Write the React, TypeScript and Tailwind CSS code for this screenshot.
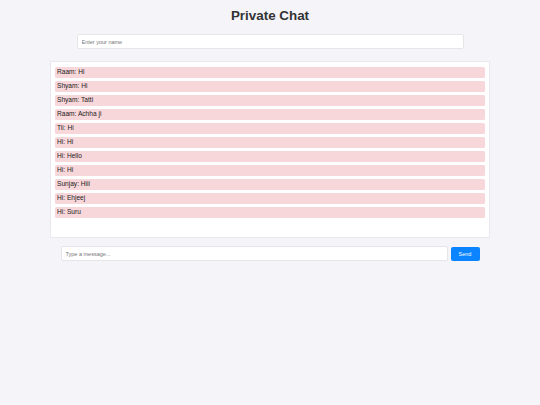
import React from "react";

const messages = [
  "Raam: Hi",
  "Shyam: Hi",
  "Shyam: Tatti",
  "Raam: Achha ji",
  "Tii: Hi",
  "Hi: Hi",
  "Hi: Hello",
  "Hi: Hi",
  "Sunjay: Hiii",
  "Hi: Ehjeej",
  "Hi: Suru",
];

export default function App() {
  return (
    <div className="w-[540px] h-[405px] bg-[#f4f4f9] text-[#333] flex flex-col items-center font-['Liberation_Sans',Arial,sans-serif]">
      <h1 className="mt-[7px] text-[13.4px] leading-[18px] font-bold text-[#333]">Private Chat</h1>
      <input
        className="mt-[9px] w-[387px] h-[15px] bg-white border border-[#e6e6ea] rounded-[2px] px-[4px] text-[5.5px] outline-none placeholder:text-[#777]"
        placeholder="Enter your name"
      />
      <div className="mt-[12px] w-[440px] h-[177px] bg-white border border-[#e8e8ee] rounded-[1px] px-[4px] pt-[5px] flex flex-col gap-[3.3px]">
        {messages.map((m, i) => (
          <div key={i} className="h-[10.7px] bg-[#f8d7da] rounded-[1.5px] px-[2px] text-[6.6px] leading-[10.7px] text-[#1a1a1a]">
            {m}
          </div>
        ))}
      </div>
      <div className="mt-[8px] flex items-center gap-[3px]">
        <input
          className="w-[387px] h-[15px] bg-white border border-[#e6e6ea] rounded-[2px] px-[4px] text-[5.5px] outline-none placeholder:text-[#777]"
          placeholder="Type a message..."
        />
        <button className="w-[29px] h-[14px] bg-[#0a84ff] rounded-[2px] text-white text-[5.5px] leading-[14px]">Send</button>
      </div>
    </div>
  );
}
